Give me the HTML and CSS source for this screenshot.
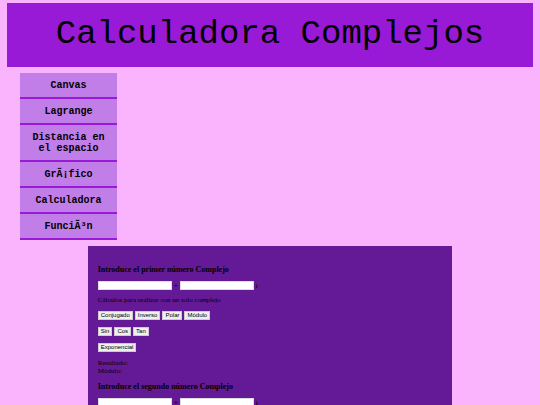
FILE: index.html
```html
<!DOCTYPE html>
<html lang="es">
<head>
    <meta charset="UTF-8">
    <meta name="viewport" content="width=device-width, initial-scale=1.0">
    <title>Calculadora Complejos</title>
    <link rel="stylesheet" href="styles.css">
</head>
<body>
    <header class="titulo">
        <h1>Calculadora Complejos</h1>
    </header>

    <nav class="menu">
        <a href="#">Canvas</a>
        <a href="#">Lagrange</a>
        <a href="#">Distancia en el espacio</a>
        <a href="#">GrÃ¡fico</a>
        <a href="#">Calculadora</a>
        <a href="#">FunciÃ³n</a>
    </nav>

    <main class="calculadora">
        <h3>Introduce el primer número Complejo</h3>
        <div class="numero">
            <input type="text" aria-label="Parte real del primer número"> +
            <input type="text" aria-label="Parte imaginaria del primer número"> i
        </div>
        <p>Cálculos para realizar con un solo complejo</p>
        <div class="botones">
            <button type="button">Conjugado</button>
            <button type="button">Inverso</button>
            <button type="button">Polar</button>
            <button type="button">Módulo</button>
        </div>
        <div class="botones">
            <button type="button">Sin</button>
            <button type="button">Cos</button>
            <button type="button">Tan</button>
        </div>
        <div class="botones">
            <button type="button">Exponencial</button>
        </div>
        <p>Resultado:<br>Módulo:</p>

        <h3>Introduce el segundo número Complejo</h3>
        <div class="numero">
            <input type="text" aria-label="Parte real del segundo número"> +
            <input type="text" aria-label="Parte imaginaria del segundo número"> i
        </div>
    </main>
</body>
</html>
```
FILE: styles.css
```css
* {
    box-sizing: border-box;
}
body {
    margin: 0;
    height: 100vh;
    padding: 3px 7px 0;
    overflow: hidden;
    background-color: #f9b4fd;
    font-family: "Liberation Serif", serif;
    font-size: 7px;
    line-height: 8px;
}

.titulo {
    padding: 11px 0 13px;
    background-color: #981ad6;
    text-align: center;
}
.titulo h1 {
    margin: 0;
    font-family: "Liberation Mono", monospace;
    font-size: 34px;
    font-weight: 400;
    line-height: 40px;
}

.menu {
    width: 97px;
    margin: 6px 0 6px 13px;
    font-family: "Liberation Mono", monospace;
    font-size: 10px;
    font-weight: bold;
    line-height: 11px;
    text-align: center;
}
.menu a {
    display: block;
    padding: 7px 10px 6px;
    background-color: #c17de8;
    border-bottom: 2px solid #981ad6;
    color: black;
    text-decoration: none;
}

.calculadora {
    width: 69.3%;
    margin: 0 auto;
    padding: 19px 10px;
    background-color: #641a96;
}
.calculadora h3 {
    margin: 0 0 7px;
    font-size: 8px;
    line-height: 9px;
}
.calculadora p {
    margin: 0 0 7px;
}
.numero {
    display: flex;
    align-items: center;
    gap: 2px;
    margin-bottom: 6px;
}
.numero input {
    width: 74px;
    height: 9px;
    padding: 0 1px;
    border: 1px solid #ddd;
    background-color: white;
    font-size: 6px;
}
.botones {
    display: flex;
    gap: 2px;
    margin-bottom: 7px;
}
.botones button {
    height: 9px;
    padding: 0 2px;
    border: 1px solid #ccc;
    background-color: #efefef;
    color: black;
    font-family: "Liberation Sans", sans-serif;
    font-size: 6px;
    line-height: 7px;
}
```
